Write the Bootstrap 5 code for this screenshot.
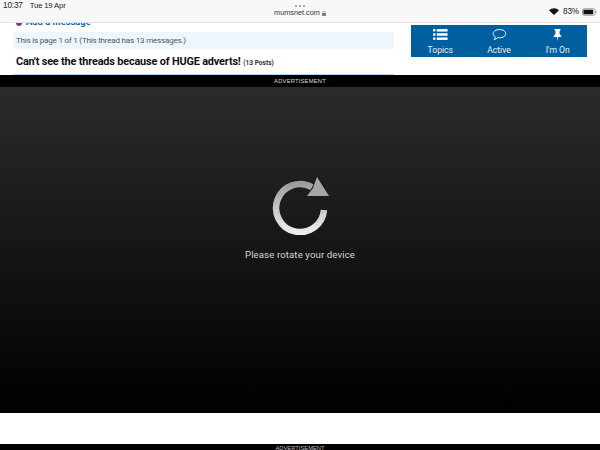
<!DOCTYPE html>
<html><head><meta charset="utf-8">
<link rel="stylesheet" href="https://cdn.jsdelivr.net/npm/bootstrap@5.3.0/dist/css/bootstrap.min.css">
<style>
html,body{width:600px;height:450px;overflow:hidden;background:#fff;font-family:Roboto,"Liberation Sans",sans-serif}
.statusbar{height:23px;background:#f8f8f8;border-bottom:1px solid #e2e2e2;color:#222;font-size:8.2px;letter-spacing:-.15px;font-family:"Liberation Sans",sans-serif;position:relative;padding:0 3px 0 3px}
.st-time{margin-top:1px;line-height:10px;white-space:pre}
.st-date{font-size:7.7px;margin-left:7px}
.st-center{position:absolute;left:0;right:0;top:3px;text-align:center;line-height:10px}
.st-dots{display:flex;justify-content:center;gap:2px;height:5px;align-items:center}
.st-dots i{width:2px;height:2px;border-radius:50%;background:#888}
.st-url{font-size:7.3px;line-height:10px;color:#333;letter-spacing:0}
.st-right{margin-top:1px;line-height:10px}
.st-right span{margin-right:-1px}
.pagetop{height:52px;overflow:hidden;position:relative}
.leftcol{width:381px;margin-left:13px}
.addmsg{height:8px;overflow:hidden;display:flex;gap:4px;color:#0e69a8;font-weight:700;font-size:9.4px;line-height:11px;padding-left:3px}
.addmsg span{display:block;margin-top:-7px}
.dotp{width:6px;height:6px;border-radius:50%;background:#7b3a8e;margin-top:-3px}
.pageinfo{background:#edf5fd;height:18px;border-top:1px solid #fff;color:#555;font-size:8.1px;line-height:17px;padding-left:3px;letter-spacing:-.23px}
.threadtitle{color:#111;font-weight:700;font-size:10.9px;letter-spacing:-.17px;line-height:14px;padding:6px 0 0 3px;white-space:nowrap}
.threadtitle small{font-size:6.6px;font-weight:700;color:#333;letter-spacing:0}
.rule{position:absolute;left:13px;width:381px;bottom:0;height:1px;background:#bcd5ef}
.tabsbox{position:absolute;left:411px;top:2px;width:176px;height:32px;background:#00609f;display:flex;color:#e6eff6;font-size:8.6px}
.tabsbox div{flex:1;text-align:center;padding-top:2px;line-height:11px}
.tabsbox svg{display:block;margin:1px auto 4px;height:13px;width:15px}
.adlabel{height:12px;background:#000;color:#ddd;font-size:5.8px;line-height:13px;text-align:center;letter-spacing:.2px;font-family:"Liberation Sans",sans-serif}
.rotpanel{height:326px;background:linear-gradient(#2b2b2b,#000);display:flex;flex-direction:column;align-items:center;color:#d4d4d4}
.rotpanel svg{margin-top:88px;width:60px;height:60px;margin-left:2px}
.rotmsg{font-size:9.6px;letter-spacing:.12px;line-height:14px;margin-top:13px}
.gap{height:31px;background:#fff}
.adlabel2{height:6px;background:#000;color:#bbb;font-size:5.8px;line-height:9px;text-align:center;overflow:hidden;font-family:"Liberation Sans",sans-serif}
</style></head><body>
<div class="statusbar d-flex justify-content-between">
  <div class="st-time">10:37<span class="st-date">Tue 19 Apr</span></div>
  <div class="st-center"><div class="st-dots"><i></i><i></i><i></i></div><div class="st-url">mumsnet.com <svg width="4" height="5" viewBox="0 0 5 6"><rect y="2.500" width="5" height="3.500" fill="#777"/><path d="M1 2.500V1.500a1.500 1.500 0 0 1 3 0V2.500" fill="none" stroke="#777" stroke-width=".7"/></svg></div></div>
  <div class="st-right d-flex align-items-center gap-1">
    <svg width="10" height="7" viewBox="0 0 20 14"><path d="M10 14 L0 4.500 A14 14 0 0 1 20 4.500Z" fill="#111"/></svg>
    <span>83%</span>
    <svg width="15" height="8" viewBox="0 0 16 8"><rect x=".5" y=".5" width="13.500" height="7" rx="2" fill="none" stroke="#999"/><rect x="1.500" y="1.500" width="10.500" height="5" rx="1" fill="#111"/><rect x="14.500" y="3" width="1" height="2" fill="#999"/></svg>
  </div>
</div>
<div class="pagetop">
  <div class="leftcol">
    <div class="addmsg"><i class="dotp"></i><span>Add a message</span></div>
    <div class="pageinfo">This is page 1 of 1 (This thread has 13 messages.)</div>
    <div class="threadtitle">Can't see the threads because of HUGE adverts! <small>(13 Posts)</small></div>
  </div>
  <div class="rule"></div>
  <div class="tabsbox">
    <div><svg viewBox="0 0 18 15"><g fill="#fff"><rect x="0" y="1" width="3" height="3" rx="1"/><rect x="0" y="6" width="3" height="3" rx="1"/><rect x="0" y="11" width="3" height="3" rx="1"/><rect x="4.500" y="1" width="13" height="3"/><rect x="4.500" y="6" width="13" height="3"/><rect x="4.500" y="11" width="13" height="3"/></g></svg>Topics</div>
    <div><svg viewBox="0 0 18 15"><path d="M9 1.500c4.300 0 7.500 2.300 7.500 5s-3.200 5-7.500 5c-.9 0-1.600-.1-2.300-.3C5.500 12.500 4 13.500 2.500 13.500c.8-.8 1.500-2 1.500-3.200C2.400 9.400 1.500 8 1.500 6.500c0-2.700 3.200-5 7.500-5z" fill="none" stroke="#fff" stroke-width="1.100"/></svg>Active</div>
    <div><svg viewBox="0 0 18 15"><path d="M5.500 1h7v1.500l-1 .5v4l2 2.500v1H9.700L9 15l-.7-4.500H4.500v-1l2-2.500V3l-1-.5z" fill="#fff"/></svg>I'm On</div>
  </div>
</div>
<div class="adlabel">ADVERTISEMENT</div>
<div class="rotpanel">
  <svg viewBox="271 175 60 60">
    <defs><linearGradient id="g" gradientUnits="userSpaceOnUse" x1="0" y1="181" x2="0" y2="235"><stop offset="0" stop-color="#999"/><stop offset="1" stop-color="#f2f2f2"/></linearGradient></defs>
    <path d="M324 210A24 24 0 1 1 312 187.200" fill="none" stroke="url(#g)" stroke-width="6.500"/>
    <path d="M317 177L329 196H307L313 188z" fill="#a6a6a6"/>
  </svg>
  <div class="rotmsg">Please rotate your device</div>
</div>
<div class="gap"></div>
<div class="adlabel2">ADVERTISEMENT</div>
</body></html>
